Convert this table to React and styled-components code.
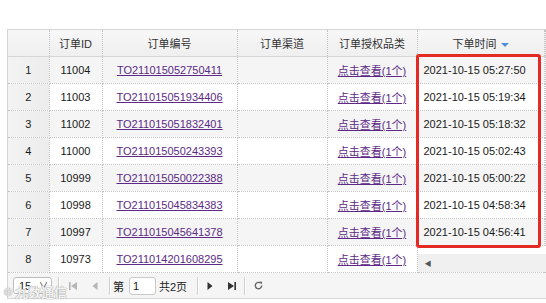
import React from 'react';
import styled, { createGlobalStyle } from 'styled-components';

const Global = createGlobalStyle`
  html, body { margin: 0; padding: 0; background: #fff; }
  body { font-family: "Liberation Sans", "Noto Sans CJK SC", sans-serif; font-size: 11px; color: #1a1a1a; }
`;

const Page = styled.div`
  width: 546px;
  height: 303px;
  padding: 29px 0 0 7px;
  box-sizing: border-box;
  overflow: hidden;
  position: relative;
`;

const Grid = styled.div`
  position: relative;
  width: 539px;
  border-left: 1px solid #d6d6d6;
  border-top: 1px solid #d6d6d6;
  box-sizing: border-box;
`;

const Table = styled.table`
  border-collapse: collapse;
  table-layout: fixed;
  width: 538px;
`;

const HeadCell = styled.th`
  height: 26px;
  padding: 0;
  font-weight: normal;
  text-align: center;
  color: #333;
  background: linear-gradient(#f7f7f7, #efefef);
  border-right: 1px dotted #c4c4c4;
  border-bottom: 1px solid #d6d6d6;
  white-space: nowrap;
`;

const Cell = styled.td`
  height: 26px;
  padding: ${p => (p.$pad ? '0 0 0 6px' : '0')};
  text-align: ${p => (p.$left ? 'left' : 'center')};
  background: ${p => (p.$num ? 'linear-gradient(90deg, #f3f3f3, #ececec)' : p.$odd ? '#f5f5f5' : '#fff')};
  border-right: 1px dotted #c4c4c4;
  border-bottom: 1px dotted #c4c4c4;
  white-space: nowrap;
  overflow: hidden;
  color: #1a1a1a;
`;

const ScrollCell = styled.td`
  padding: 0;
  background: #fff;
  border-bottom: 1px dotted #c4c4c4;
  vertical-align: bottom;
`;

const Track = styled.div`
  height: 18px;
  background: #f0f0f0;
  display: flex;
  align-items: center;
  padding-left: 7px;
  color: #555;
  font-size: 7px;
`;

const Link = styled.a`
  color: #5c2a86;
  text-decoration: underline;
  cursor: pointer;
`;

const SortArrow = styled.span`
  display: inline-block;
  width: 0;
  height: 0;
  margin-left: 4px;
  vertical-align: middle;
  border-left: 4px solid transparent;
  border-right: 4px solid transparent;
  border-top: 4px solid #4d8fd6;
`;

const Highlight = styled.div`
  position: absolute;
  left: 408px;
  top: 24px;
  width: 125px;
  height: 194px;
  border: 3px solid #e32a25;
  border-radius: 3px;
  box-sizing: border-box;
  pointer-events: none;
`;

const Pager = styled.div`
  height: 25px;
  display: flex;
  align-items: center;
  background: #f5f5f5;
  border-bottom: 1px solid #d6d6d6;
  padding-left: 5px;
  color: #1a1a1a;
`;

const Select = styled.div`
  width: 39px;
  height: 17px;
  box-sizing: border-box;
  border: 1px solid #bdbdbd;
  border-radius: 3px;
  background: #fff;
  display: flex;
  align-items: center;
  justify-content: space-between;
  padding: 0 3px 0 5px;
  font-size: 11px;
`;

const Sep = styled.div`
  width: 1px;
  height: 18px;
  background: #d0d0d0;
  border-right: 1px solid #fff;
  margin: 0 ${p => p.$r ?? 2}px 0 ${p => p.$l ?? 6}px;
`;

const Btn = styled.div`
  width: 22px;
  height: 20px;
  display: flex;
  align-items: center;
  justify-content: center;
  color: ${p => (p.$off ? '#b5b5b5' : '#333')};
`;

const PageInput = styled.div`
  width: 27px;
  height: 18px;
  box-sizing: border-box;
  border: 1px solid #c9c9c9;
  border-radius: 3px;
  background: #fff;
  margin: 0 3px 0 5px;
  padding-left: 3px;
  line-height: 16px;
`;

const Watermark = styled.div`
  position: absolute;
  left: 4px;
  top: 282px;
  display: flex;
  align-items: center;
  gap: 3px;
  color: rgba(255, 255, 255, 0.9);
  font-size: 13px;
  font-weight: bold;
  text-shadow: 0 0 1px #9a9a9a, 0 0 1px #9a9a9a;
`;

const Icon = ({ d }) => (
  <svg width="10" height="10" viewBox="0 0 10 10">
    <path d={d} fill="currentColor" />
  </svg>
);

const rows = [
  ['11004', 'TO211015052750411', '2021-10-15 05:27:50'],
  ['11003', 'TO211015051934406', '2021-10-15 05:19:34'],
  ['11002', 'TO211015051832401', '2021-10-15 05:18:32'],
  ['11000', 'TO211015050243393', '2021-10-15 05:02:43'],
  ['10999', 'TO211015050022388', '2021-10-15 05:00:22'],
  ['10998', 'TO211015045834383', '2021-10-15 04:58:34'],
  ['10997', 'TO211015045641378', '2021-10-15 04:56:41'],
  ['10973', 'TO211014201608295', null],
];

export default function App() {
  return (
    <Page>
      <Global />
      <Grid>
        <Table>
          <colgroup>
            <col style={{ width: 41 }} />
            <col style={{ width: 53 }} />
            <col style={{ width: 135 }} />
            <col style={{ width: 90 }} />
            <col style={{ width: 90 }} />
            <col style={{ width: 127 }} />
            <col />
          </colgroup>
          <thead>
            <tr>
              <HeadCell />
              <HeadCell>订单ID</HeadCell>
              <HeadCell>订单编号</HeadCell>
              <HeadCell>订单渠道</HeadCell>
              <HeadCell>订单授权品类</HeadCell>
              <HeadCell>下单时间<SortArrow /></HeadCell>
              <HeadCell />
            </tr>
          </thead>
          <tbody>
            {rows.map(([id, no, time], i) => (
              <tr key={id}>
                <Cell $num>{i + 1}</Cell>
                <Cell $odd={i % 2 === 0}>{id}</Cell>
                <Cell $odd={i % 2 === 0}><Link>{no}</Link></Cell>
                <Cell $odd={i % 2 === 0} />
                <Cell $odd={i % 2 === 0}><Link>点击查看(1个)</Link></Cell>
                {time ? (
                  <>
                    <Cell $odd={i % 2 === 0} $left $pad>{time}</Cell>
                    <Cell $odd={i % 2 === 0} />
                  </>
                ) : (
                  <ScrollCell colSpan={2}>
                    <Track>◀</Track>
                  </ScrollCell>
                )}
              </tr>
            ))}
          </tbody>
        </Table>
        <Pager>
          <Select>15 <span style={{ fontSize: 9 }}>∨</span></Select>
          <Sep $l={6} $r={2} />
          <Btn $off><Icon d="M1 1h1.6v8H1z M9 1v8L3 5z" /></Btn>
          <Btn $off><Icon d="M7.5 1v8L2.5 5z" /></Btn>
          <Sep $l={3} $r={2} />
          <span>第</span>
          <PageInput>1</PageInput>
          <span>共2页</span>
          <Sep $l={10} $r={0} />
          <Btn><Icon d="M2.5 1v8L7.5 5z" /></Btn>
          <Btn><Icon d="M1 1v8L7 5z M7.4 1H9v8H7.4z" /></Btn>
          <Sep $l={1} $r={1} />
          <Btn>
            <svg width="11" height="11" viewBox="0 0 12 12">
              <path d="M9.5 6a3.5 3.5 0 1 1-1.2-2.6" fill="none" stroke="#666" strokeWidth="1.5" />
              <path d="M7 1.5l3 0.5-0.5 3z" fill="#666" />
            </svg>
          </Btn>
        </Pager>
        <Highlight />
      </Grid>
      <Watermark>
        <span style={{ fontSize: 11 }}>©</span>
        <span>九数通信</span>
      </Watermark>
    </Page>
  );
}
